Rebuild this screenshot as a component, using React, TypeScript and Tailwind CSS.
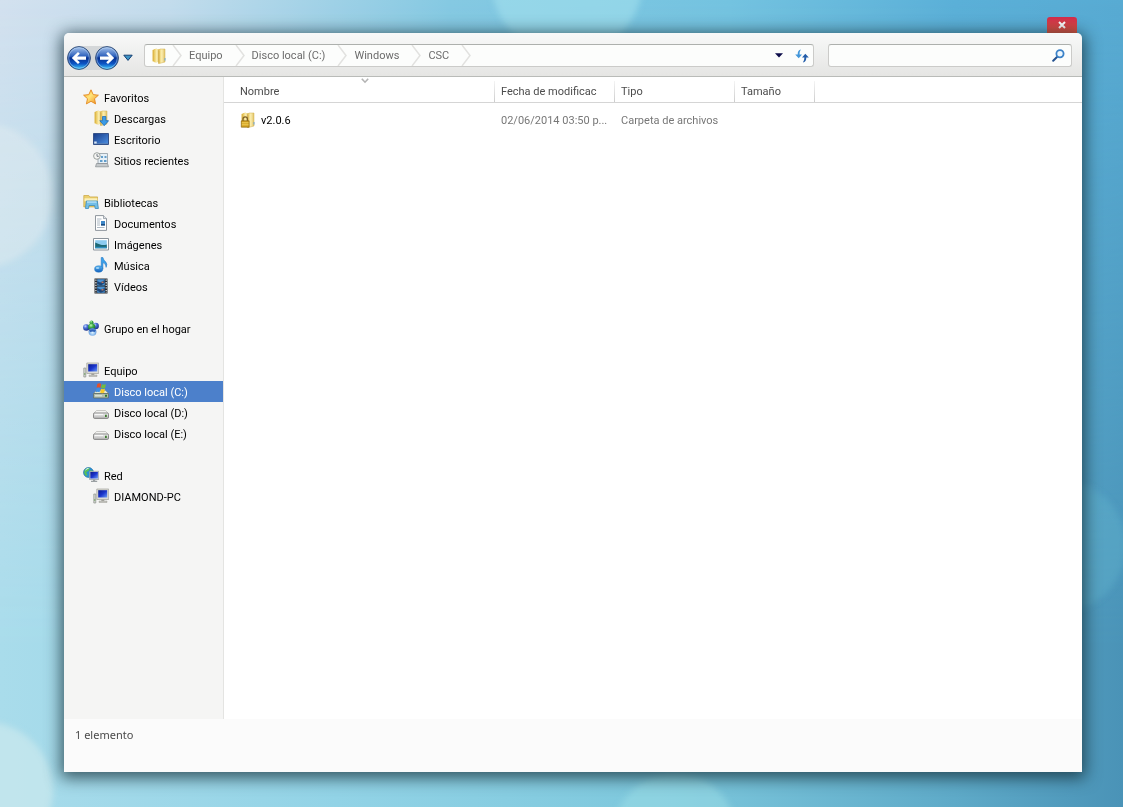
import { ReactNode } from 'react'
import clsx from 'clsx'

function Defs() {
  return (
    <svg width="0" height="0" className="absolute" aria-hidden="true">
      <defs>
        <linearGradient id="gold" x1="0" x2="1">
          <stop offset="0" stopColor="#e8c65a" />
          <stop offset=".5" stopColor="#fbeeb0" />
          <stop offset="1" stopColor="#e0c063" />
        </linearGradient>
        <linearGradient id="screen" x1="0" x2="1" y2="1">
          <stop offset="0" stopColor="#0b1c8c" />
          <stop offset=".5" stopColor="#1b35cc" />
          <stop offset="1" stopColor="#6a9cf5" />
        </linearGradient>
        <linearGradient id="desk" x1="0" x2="1" y2="1">
          <stop offset="0" stopColor="#173a86" />
          <stop offset="1" stopColor="#4f93e6" />
        </linearGradient>
        <linearGradient id="sky" x2="0" y2="1">
          <stop offset="0" stopColor="#57b4f0" />
          <stop offset="1" stopColor="#1561bd" />
        </linearGradient>
        <linearGradient id="star" x2="1" y2="1">
          <stop offset="0" stopColor="#fbb02c" />
          <stop offset=".45" stopColor="#ffe47a" />
          <stop offset="1" stopColor="#f08a1c" />
        </linearGradient>
        <linearGradient id="drive" x2="0" y2="1">
          <stop offset="0" stopColor="#f4f4f4" />
          <stop offset="1" stopColor="#b4b4b4" />
        </linearGradient>
        <linearGradient id="orb" x2="0" y2="1">
          <stop offset="0" stopColor="#a9c6ec" />
          <stop offset=".42" stopColor="#2f62bd" />
          <stop offset=".5" stopColor="#07308f" />
          <stop offset=".75" stopColor="#0d55c4" />
          <stop offset="1" stopColor="#3fd0ff" />
        </linearGradient>
        <radialGradient id="ballBlue" cx=".35" cy=".3" r=".75">
          <stop offset="0" stopColor="#c9dbff" />
          <stop offset=".4" stopColor="#4a6fd6" />
          <stop offset="1" stopColor="#182f86" />
        </radialGradient>
        <radialGradient id="ballGreen" cx=".4" cy=".3" r=".75">
          <stop offset="0" stopColor="#c4f5b4" />
          <stop offset=".4" stopColor="#3fae48" />
          <stop offset="1" stopColor="#14652a" />
        </radialGradient>
        <radialGradient id="ballSky" cx=".5" cy=".6" r=".65">
          <stop offset="0" stopColor="#e0f3ff" />
          <stop offset=".6" stopColor="#7db2ea" />
          <stop offset="1" stopColor="#2a58a8" />
        </radialGradient>
      </defs>
    </svg>
  )
}

function Icon({ children, className }: { children: ReactNode; className?: string }) {
  return (
    <svg
      width="16"
      height="16"
      viewBox="0 0 16 16"
      fill="none"
      aria-hidden="true"
      className={clsx('shrink-0', className)}
    >
      {children}
    </svg>
  )
}

function FolderShape() {
  return (
    <>
      <path d="M1.500 2 5.500.6v13.800L1.500 13.200z" fill="#dfb94a" />
      <path d="M3 1h5.500v13.200H3z" fill="url(#gold)" />
      <path d="M7.500 2.200 9 1h5v13l-6.500 1.700z" fill="url(#gold)" stroke="#d3b052" strokeWidth=".5" />
      <path d="M8 2.500v12.500" stroke="#caa440" strokeWidth=".7" />
      <path d="M14 10v2.600" stroke="#6ba4d8" />
    </>
  )
}

function PcShape() {
  return (
    <>
      <path d="M.8 6h2v9h-2z" fill="#d5d8d2" stroke="#8d918b" strokeWidth=".7" />
      <path d="M1.300 11h1v2h-1z" fill="#79a36c" />
      <path d="M3.800 1h11.900v10.500H3.800z" fill="#dcdcd6" stroke="#a0a09a" strokeWidth=".7" />
      <path d="M5.200 2.200h9v7.300h-9z" fill="url(#screen)" />
      <path d="M8.300 11.500h3V13h-3z" fill="#a6a6a0" />
      <path d="M6 13h8v1.500H6z" fill="#c6c6c0" stroke="#8f8f8a" strokeWidth=".4" />
    </>
  )
}

function DriveShape() {
  return (
    <>
      <path d="M3.500 6.500h9L15.400 9.500H.6z" fill="#f3f3f1" stroke="#b5b5b1" strokeWidth=".7" />
      <path
        d="M1.600 9h12.800q1.100 0 1.100 1.200v3q0 1.200-1.100 1.200H1.600Q.5 14.400.5 13.200v-3Q.5 9 1.600 9z"
        fill="url(#drive)"
        stroke="#7d7d7d"
        strokeWidth=".9"
      />
      <path d="M12 10.800h1.800v2.200H12z" fill="#3f7d31" />
      <path d="M2 10.400h8" stroke="#fff" strokeWidth=".8" />
    </>
  )
}

const icons = {
  star: (
    <path
      d="m8 .8 2.200 4.800 5.200.6-3.900 3.500 1.100 5.200L8 12.300l-4.600 2.600 1.100-5.200L.6 6.200l5.200-.6z"
      fill="url(#star)"
      stroke="#e2871f"
      strokeWidth=".9"
      strokeLinejoin="round"
    />
  ),
  downloads: (
    <>
      <FolderShape />
      <path
        d="M9.500 6.500h3.400v4.200h2.700L11.200 15.700 6.800 10.700h2.700z"
        fill="#3b9be6"
        stroke="#1766b4"
        strokeWidth=".7"
      />
    </>
  ),
  desktop: (
    <>
      <path d="M.5 2.500h15v11H.5z" fill="url(#desk)" stroke="#35528a" />
      <path d="M1 12.200h14V13H1z" fill="#5d83b5" />
      <path d="M1.200 10.500h2.500v2H1.200z" fill="#dce8f5" />
    </>
  ),
  recent: (
    <>
      <path d="M5 1.500h9.500v10H5z" fill="#e6f0f7" stroke="#8f9aa3" strokeWidth=".8" />
      <path d="M3.500 11.500h11l1 3.300h-13z" fill="#c4c8ca" stroke="#858b8f" strokeWidth=".7" />
      <path d="M8 4h2v2H8zM11.500 4h2v2h-2zM7 8h2.500v2H7zM11 8h2.500v2H11z" fill="#629ecb" />
      <circle cx="3.900" cy="4" r="3.300" fill="#f5f5f3" stroke="#929894" strokeWidth=".9" />
      <path d="M4 2v2.300h1.800" stroke="#56606a" strokeWidth=".8" />
    </>
  ),
  libraries: (
    <>
      <path d="M.8 1.500h5l1 1.400H14.500v10H.8z" fill="#eccf6c" stroke="#c9a540" strokeWidth=".7" />
      <path d="M1.500 4.300h12.800v3H1.500z" fill="#fbf0ba" />
      <path d="M2.500 14.500 3.300 7h11l1.100 7.500h-3.200l-.5-3H6l-.5 3z" fill="#73bfe8" stroke="#3b8abc" strokeWidth=".8" />
      <path d="M4 8h9.500" stroke="#d5f2ff" />
    </>
  ),
  document: (
    <>
      <path d="M2.500.6h8l3 3v11.800h-11z" fill="#fff" stroke="#838b93" strokeWidth=".9" />
      <path d="M10.500.6v3h3" fill="#dfe4e8" stroke="#838b93" strokeWidth=".7" />
      <path d="M4 4h4.500M4 6h3M4 8h3M4 10h3M4 12.500h7.500" stroke="#9aa8b5" strokeWidth=".8" />
      <path d="M8 6h4v4.500H8z" fill="#3e88c9" />
      <path d="M8 9h4v1.500H8z" fill="#1b4c80" />
    </>
  ),
  pictures: (
    <>
      <path d="M.5 2.500h15v11.500H.5z" fill="#fff" stroke="#8b939b" />
      <path d="M2.200 4.200h11.600v8H2.200z" fill="#8ccbf0" />
      <path d="M2.200 6.500q2 1 5 2t6.600 0v3.700H2.200z" fill="#1d6874" />
      <path d="M2.200 10.800h11.600v1.400H2.200z" fill="#2f8fc0" />
    </>
  ),
  music: (
    <>
      <path
        d="M8.200.5h1.700q.5 2.600 2.700 4.300 2.200 2.200.5 5.600.2-3.500-3.200-4.800V12H8.200z"
        fill="#3aa1ea"
        stroke="#1a6cbc"
        strokeWidth=".5"
      />
      <ellipse cx="5.700" cy="12" rx="4.100" ry="3.200" fill="url(#sky)" stroke="#2176c3" strokeWidth=".5" />
      <ellipse cx="4.600" cy="10.900" rx="1.800" ry="1" fill="#c7ecff" opacity=".7" />
    </>
  ),
  video: (
    <>
      <path d="M1.500.5h13v15h-13z" fill="#262a31" />
      <path d="M4.200 1.200h7.600v6.300H4.200zM4.200 8.500h7.600v6.300H4.200z" fill="#4b93d3" />
      <path d="m4.200 3 3 1.500L11.800 2v3L8 7.500 4.200 6zM4.200 10l3.600 1.500 4-1.500v3l-4 1.800-3.600-2z" fill="#1e4678" />
      <path d="M8.500 3.500h2v1.500h-2zM8.500 11h2v1.500h-2z" fill="#ba7864" />
      <path d="M2.900 1.500v13.500M13.200 1.500v13.500" stroke="#e8eaec" strokeWidth="1.200" strokeDasharray="1.300 1.300" />
    </>
  ),
  homegroup: (
    <>
      <circle cx="8.500" cy="2.500" r="2" fill="url(#ballGreen)" />
      <circle cx="12.700" cy="6" r="3.200" fill="url(#ballBlue)" />
      <circle cx="3.300" cy="7.500" r="3.200" fill="url(#ballBlue)" />
      <circle cx="8.700" cy="6.800" r="3.600" fill="url(#ballGreen)" />
      <circle cx="9.500" cy="11.800" r="3.900" fill="url(#ballSky)" />
      <path d="M6.200 10.200q3.200-2 6.600 0l-1 1.700q-2.200-1-4.600 0z" fill="#2f62b8" />
    </>
  ),
  computer: <PcShape />,
  systemDrive: (
    <>
      <path d="M3.500 7.500h9l3 3H.5z" fill="#e2e7d6" stroke="#8a9488" strokeWidth=".6" />
      <path d="M.6 10.500h14.800V15H.6z" fill="#b3bfae" stroke="#5d6b65" strokeWidth=".8" />
      <path d="M2 12.800h7" stroke="#e8ede4" />
      <path d="M12 11.800h2v2h-2z" fill="#2f7c26" />
      <path d="M4.300.9q2-1.200 3.900 0l-.8 3.900q-1.800-1-3.800 0z" fill="#e5502a" />
      <path d="M8.900 1.200q2 .9 4 0l-.8 3.900q-2 .9-4 0z" fill="#72bd3c" />
      <path d="M3.500 5.500q2-1.200 3.800 0L6.600 9.300q-1.900-1-3.800 0z" fill="#3f8fe5" />
      <path d="M8 5.800q2 .9 4 0l-.8 3.900q-2 .9-4 0z" fill="#f8c829" />
    </>
  ),
  drive: <DriveShape />,
  network: (
    <>
      <circle cx="5.500" cy="5.500" r="5" fill="#2991d3" stroke="#1b6aa4" strokeWidth=".6" />
      <path d="M2 2.500q3-2.500 5-1.500L5.500 4 3.200 5.200 4.500 8 3 9Q0 6 2 2.500zM7.500 3l2.500 1v3L7 6z" fill="#5abf57" />
      <path d="M2.500 3q1.500-1.800 3-1.500" stroke="#d7f6ff" />
      <path d="M6.500 4.300h9.200v8.200H6.500z" fill="#cfd6e2" stroke="#868d94" strokeWidth=".6" />
      <path d="M7.300 5h7.600v6.500H7.300z" fill="url(#screen)" />
      <path d="M10 12.500h2.200v1.200h2v1.300H8v-1.300h2z" fill="#9ba0a3" />
    </>
  ),
}

type SidebarItem = {
  label: string
  icon: keyof typeof icons
  selected?: boolean
}

type SidebarGroup = SidebarItem & { children?: SidebarItem[] }

const groups: SidebarGroup[] = [
  {
    label: 'Favoritos',
    icon: 'star',
    children: [
      { label: 'Descargas', icon: 'downloads' },
      { label: 'Escritorio', icon: 'desktop' },
      { label: 'Sitios recientes', icon: 'recent' },
    ],
  },
  {
    label: 'Bibliotecas',
    icon: 'libraries',
    children: [
      { label: 'Documentos', icon: 'document' },
      { label: 'Imágenes', icon: 'pictures' },
      { label: 'Música', icon: 'music' },
      { label: 'Vídeos', icon: 'video' },
    ],
  },
  { label: 'Grupo en el hogar', icon: 'homegroup' },
  {
    label: 'Equipo',
    icon: 'computer',
    children: [
      { label: 'Disco local (C:)', icon: 'systemDrive', selected: true },
      { label: 'Disco local (D:)', icon: 'drive' },
      { label: 'Disco local (E:)', icon: 'drive' },
    ],
  },
  {
    label: 'Red',
    icon: 'network',
    children: [{ label: 'DIAMOND-PC', icon: 'computer' }],
  },
]

const crumbs = ['Equipo', 'Disco local (C:)', 'Windows', 'CSC']

function Wallpaper() {
  return (
    <svg
      className="absolute inset-0 -z-10 h-full w-full"
      viewBox="0 0 1123 807"
      preserveAspectRatio="none"
      aria-hidden="true"
    >
      <defs>
        <linearGradient id="wallTop">
          <stop offset="0" stopColor="#d3e1ef" />
          <stop offset=".15" stopColor="#c3dcec" />
          <stop offset=".4" stopColor="#85c9e2" />
          <stop offset=".65" stopColor="#74c3e0" />
          <stop offset=".85" stopColor="#5bb0d8" />
          <stop offset="1" stopColor="#58abd3" />
        </linearGradient>
        <linearGradient id="wallBottom">
          <stop offset="0" stopColor="#a9dceb" />
          <stop offset=".3" stopColor="#92d3e6" />
          <stop offset=".6" stopColor="#7cc7dc" />
          <stop offset=".85" stopColor="#5eaac8" />
          <stop offset="1" stopColor="#4a93b7" />
        </linearGradient>
        <linearGradient id="fade" x2="0" y2="1">
          <stop offset="0" stopColor="#000" />
          <stop offset=".8" stopColor="#fff" />
        </linearGradient>
        <mask id="fadeMask">
          <rect width="1123" height="807" fill="url(#fade)" />
        </mask>
        <filter id="soft">
          <feGaussianBlur stdDeviation="3" />
        </filter>
      </defs>
      <rect width="1123" height="807" fill="url(#wallTop)" />
      <rect width="1123" height="807" fill="url(#wallBottom)" mask="url(#fadeMask)" />
      <g filter="url(#soft)">
        <circle cx="-20" cy="195" r="73" fill="#e6edf1" opacity=".4" />
        <circle cx="-15" cy="790" r="68" fill="#d5ecef" opacity=".55" />
        <circle cx="567" cy="-20" r="76" fill="#a9e6f0" opacity=".5" />
        <circle cx="675" cy="835" r="62" fill="#a4e3e8" opacity=".4" />
        <circle cx="1060" cy="546" r="66" fill="#6cc3d9" opacity=".25" />
      </g>
    </svg>
  )
}

function NavButton({ label, flip }: { label: string; flip?: boolean }) {
  return (
    <button aria-label={label} className="size-6">
      <svg viewBox="0 0 24 24" className="size-6" aria-hidden="true">
        <circle cx="12" cy="12" r="11.400" fill="url(#orb)" stroke="#35517c" strokeWidth="1" />
        <circle cx="12" cy="12" r="10.300" fill="none" stroke="#bcd8f5" strokeWidth=".7" opacity=".7" />
        <path
          d="M4.800 12 11 6l1.800 1.800-2.700 2.700H19v3.200h-8.900l2.700 2.600L11 18z"
          transform={flip ? 'translate(24 0) scale(-1 1)' : undefined}
          fill="#fff"
        />
      </svg>
    </button>
  )
}

function Separator() {
  return (
    <svg width="10" height="21" viewBox="0 0 10 21" fill="none" className="shrink-0" aria-hidden="true">
      <path d="M1 0 9 10.500 1 21" stroke="#e2e2e0" strokeWidth="1.500" />
    </svg>
  )
}

function Toolbar() {
  return (
    <header className="flex h-11 shrink-0 items-center rounded-t-[5px] border-b border-[#b9bbb8] bg-linear-to-b from-[#f8f9f9] to-[#e5e5e3] pt-0.5 pr-2.5 pl-[3px]">
      <nav aria-label="Historial" className="flex shrink-0 items-center pt-1">
        <div className="flex gap-1 rounded-full bg-[#d4d7d9]">
          <NavButton label="Atrás" />
          <NavButton label="Adelante" flip />
        </div>
        <button aria-label="Páginas recientes" className="ml-1">
          <svg width="10" height="8" viewBox="0 0 10 8" aria-hidden="true">
            <path d="M.8 1.200h8.400L5 6.400z" fill="#3d93c5" stroke="#153f72" strokeLinejoin="round" />
          </svg>
        </button>
      </nav>

      <div className="ml-[11px] flex h-[23px] min-w-0 flex-1 items-center rounded-[3px] border border-[#cbcbc9] border-t-[#adb0ad] bg-[#fcfdfc] pl-1.5">
        <Icon>
          <FolderShape />
        </Icon>
        <ol className="ml-[5px] flex items-center text-[#6c6c6c]">
          <li className="flex">
            <Separator />
          </li>
          {crumbs.map((crumb) => (
            <li key={crumb} className="flex items-center">
              <a href="#" className="pr-3 pl-[7px] whitespace-nowrap">
                {crumb}
              </a>
              <Separator />
            </li>
          ))}
        </ol>
        <button aria-label="Ubicaciones anteriores" className="ml-auto px-1">
          <svg width="8" height="5" viewBox="0 0 8 5" aria-hidden="true">
            <path d="M0 .3h8L4 4.500z" fill="#0c0c4a" />
          </svg>
        </button>
        <button aria-label="Actualizar" className="mr-1 ml-2">
          <svg width="14" height="14" viewBox="0 0 14 14" fill="none" aria-hidden="true">
            <path d="M5.800.5Q2.600 1 2.700 5.500H.2l3.500 3.800L7 5.500H4.600Q4.500 2.500 5.800.5z" fill="#4397da" />
            <path d="M7.900 13.500q3.400-.6 3.400-5h2.500L10.300 4.700 7 8.500h2.400q0 3-1.500 5z" fill="#235daa" />
          </svg>
        </button>
      </div>

      <form role="search" className="ml-3.5 flex h-[23px] w-61 shrink-0 items-center rounded-[3px] border border-[#cbcbc9] border-t-[#adb0ad] bg-[#fcfdfc] pr-1.5">
        <input aria-label="Buscar" className="h-full min-w-0 flex-1 px-2 outline-none" />
        <button aria-label="Iniciar búsqueda">
          <svg width="13" height="13" viewBox="0 0 13 13" fill="none" aria-hidden="true">
            <path d="M1.200 11.800 5 8" stroke="#24518f" strokeWidth="2" strokeLinecap="round" />
            <circle cx="8" cy="4.800" r="3.600" fill="#eef7fd" stroke="#3b82c8" strokeWidth="1.800" />
          </svg>
        </button>
      </form>
    </header>
  )
}

function SidebarLink({ item, nested }: { item: SidebarItem; nested?: boolean }) {
  return (
    <a
      href="#"
      aria-current={item.selected ? 'page' : undefined}
      className={clsx(
        'flex h-[21px] items-center whitespace-nowrap',
        nested ? 'pl-[29px]' : 'pl-[19px]',
        item.selected ? 'bg-[#4c80cb] text-white' : 'text-black'
      )}
    >
      <Icon className="mb-0.5">{icons[item.icon]}</Icon>
      <span className="ml-[5px] pt-0.5">{item.label}</span>
    </a>
  )
}

function Sidebar() {
  return (
    <nav
      aria-label="Ubicaciones"
      className="flex w-40 shrink-0 flex-col gap-[21px] border-r border-[#e4e4e2] bg-[#f5f5f4] pt-2.5"
    >
      {groups.map(({ children, ...group }) => (
        <div key={group.label}>
          <SidebarLink item={group} />
          {children?.map((item) => (
            <SidebarLink key={item.label} item={item} nested />
          ))}
        </div>
      ))}
    </nav>
  )
}

function HeaderCell({ children, className }: { children: ReactNode; className?: string }) {
  return (
    <th
      className={clsx(
        'relative overflow-hidden border-b border-[#d5d5d5] pt-1 text-left font-normal whitespace-nowrap',
        className ?? 'pl-1.5'
      )}
    >
      {children}
      <span className="absolute top-1 right-0 bottom-0 w-px bg-linear-to-b from-[#f4f4f4] to-[#cdcdcd]" />
    </th>
  )
}

function FileList() {
  return (
    <main className="min-w-0 flex-1 bg-white">
      <table className="w-full table-fixed border-separate border-spacing-0">
        <colgroup>
          <col className="w-[271px]" />
          <col className="w-[120px]" />
          <col className="w-[120px]" />
          <col className="w-20" />
          <col />
        </colgroup>
        <thead className="text-[#4c4c4c]">
          <tr className="h-[26px]">
            <HeaderCell className="pl-4">
              Nombre
              <svg
                width="8"
                height="6"
                viewBox="0 0 8 6"
                fill="none"
                className="absolute top-px left-1/2 ml-px"
                aria-hidden="true"
              >
                <path d="M.8.800 4 4.200 7.200.8" stroke="#b3b3b3" strokeWidth="1.600" />
              </svg>
            </HeaderCell>
            <HeaderCell>Fecha de modificac</HeaderCell>
            <HeaderCell>Tipo</HeaderCell>
            <HeaderCell>Tamaño</HeaderCell>
            <td className="border-b border-[#d5d5d5]" />
          </tr>
        </thead>
        <tbody>
          <tr className="h-9 text-[#777]">
            <td className="pl-4">
              <span className="flex items-center text-black">
                <Icon className="mb-0.5">
                  <FolderShape />
                  <path d="M3 9V7q0-2.200 2.200-2.200T7.400 7v2" stroke="#806326" strokeWidth="1.300" />
                  <path d="M1.300 8.800h7.800v6.400H1.300z" fill="#d3a11e" stroke="#8d6818" strokeWidth=".7" />
                  <path d="M1.800 10.800h6.800M1.800 12.800h6.800" stroke="#f7dc70" strokeWidth=".8" />
                </Icon>
                <span className="ml-[5px]">v2.0.6</span>
              </span>
            </td>
            <td className="pl-1.5 whitespace-nowrap">02/06/2014 03:50 p...</td>
            <td className="pl-1.5 whitespace-nowrap">Carpeta de archivos</td>
            <td />
            <td />
          </tr>
        </tbody>
      </table>
    </main>
  )
}

export default function App() {
  return (
    <div className="relative isolate flex min-h-screen flex-col overflow-hidden pt-4 pr-[41px] pb-[35px] pl-16 font-['Roboto',sans-serif] text-[11px] leading-4">
      <Wallpaper />
      <Defs />
      <button
        aria-label="Cerrar"
        className="mt-px mr-[5px] flex h-4 w-[30px] items-center justify-center self-end rounded-t-[3px] bg-linear-to-b from-[#d42c4c] to-[#e2523a]"
      >
        <svg width="8" height="8" viewBox="0 0 8 8" aria-hidden="true">
          <path d="m1 1 6 6M7 1 1 7" stroke="#fff" strokeWidth="2" />
        </svg>
      </button>
      <div className="flex flex-1 flex-col rounded-t-[5px] shadow-[0_3px_16px_3px_rgba(20,45,55,0.75)]">
        <Toolbar />
        <div className="flex flex-1">
          <Sidebar />
          <FileList />
        </div>
        <footer className="h-[53px] shrink-0 bg-[#fbfbfb] pt-2 pl-[11px] font-['Noto_Sans',sans-serif] text-[11px] text-[#4a4a4a]">
          1 elemento
        </footer>
      </div>
    </div>
  )
}
